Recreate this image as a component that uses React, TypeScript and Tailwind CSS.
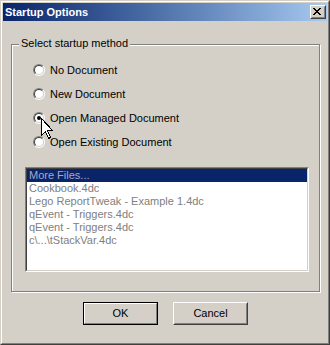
import React from "react";

const items = [
  "Cookbook.4dc",
  "Lego ReportTweak - Example 1.4dc",
  "qEvent - Triggers.4dc",
  "qEvent - Triggers.4dc",
  "c\\...\\tStackVar.4dc",
];

function Radio({ label, checked }: { label: string; checked?: boolean }) {
  return (
    <div className="flex items-center h-[16px] gap-[5px]">
      <div className="w-[12px] h-[12px] rounded-full border border-t-[#808080] border-l-[#808080] border-r-white border-b-white">
        <div className="w-full h-full rounded-full border border-t-[#404040] border-l-[#404040] border-r-[#d4d0c8] border-b-[#d4d0c8] bg-white flex items-center justify-center">
          {checked && <div className="w-[4px] h-[4px] rounded-full bg-black" />}
        </div>
      </div>
      <span className="text-black leading-[13px]">{label}</span>
    </div>
  );
}

function CloseGlyph() {
  const rows = [
    "XX....XX",
    ".XX..XX.",
    "..XXXX..",
    "...XX...",
    "..XXXX..",
    ".XX..XX.",
    "XX....XX",
  ];
  return (
    <svg width="8" height="7" viewBox="0 0 8 7" shapeRendering="crispEdges">
      {rows.map((r, y) =>
        r.split("").map((c, x) =>
          c === "X" ? <rect key={`${x}-${y}`} x={x} y={y} width="1" height="1" fill="#000" /> : null
        )
      )}
    </svg>
  );
}

export default function App() {
  return (
    <div className="relative w-[330px] h-[345px] border border-t-[#d4d0c8] border-l-[#d4d0c8] border-r-[#404040] border-b-[#404040] font-['Liberation_Sans',Arial,sans-serif] text-[11px] select-none">
      <div className="h-full border border-t-white border-l-white border-r-[#808080] border-b-[#808080] bg-[#d4d0c8] p-px flex flex-col">
        {/* Title bar */}
        <div className="h-[18px] bg-linear-to-r from-[#0a246a] to-[#a6caf0] flex items-center justify-between pl-[2px] pr-px">
          <span className="text-white font-bold leading-[13px]">Startup Options</span>
          <div className="w-[16px] h-[14px] border border-t-white border-l-white border-r-[#404040] border-b-[#404040]">
            <div className="w-full h-full border border-t-[#d4d0c8] border-l-[#d4d0c8] border-r-[#808080] border-b-[#808080] bg-[#d4d0c8] pl-px pt-px">
              <CloseGlyph />
            </div>
          </div>
        </div>

        {/* Client */}
        <div className="flex-1 flex flex-col">
          <div className="relative mt-[23px] ml-[8px] w-[309px] h-[248px] border border-[#808080] shadow-[inset_1px_1px_0_#ffffff,1px_1px_0_#ffffff]">
            <span className="absolute -top-[8px] left-[7px] px-[2px] bg-[#d4d0c8] text-black leading-[13px]">
              Select startup method
            </span>
            <div className="flex flex-col gap-[8px] pt-[17px] pl-[21px]">
              <Radio label="No Document" />
              <Radio label="New Document" />
              <Radio label="Open Managed Document" checked />
              <Radio label="Open Existing Document" />
            </div>
            <div className="mt-[17px] ml-[13px] w-[284px] h-[105px] border border-t-[#808080] border-l-[#808080] border-r-white border-b-white">
              <div className="w-full h-full border border-t-[#404040] border-l-[#404040] border-r-[#d4d0c8] border-b-[#d4d0c8] bg-white">
                <div className="h-[13px] leading-[13px] bg-[#0a246a] text-[#a4a8c8] pl-[2px]">More Files...</div>
                {items.map((t, i) => (
                  <div key={i} className="h-[13px] leading-[13px] text-[#808080] pl-[2px]">
                    {t}
                  </div>
                ))}
              </div>
            </div>
          </div>

          <div className="flex mt-[10px] pl-[80px] gap-[15px]">
            <div className="w-[75px] h-[23px] border border-black">
              <div className="w-full h-full border border-t-white border-l-white border-r-[#808080] border-b-[#808080] flex items-center justify-center text-black">
                OK
              </div>
            </div>
            <div className="w-[75px] h-[23px] border border-t-white border-l-white border-r-[#404040] border-b-[#404040]">
              <div className="w-full h-full border border-t-[#d4d0c8] border-l-[#d4d0c8] border-r-[#808080] border-b-[#808080] flex items-center justify-center text-black">
                Cancel
              </div>
            </div>
          </div>
        </div>
      </div>

      {/* Mouse cursor */}
      <svg className="absolute left-[39px] top-[116px]" width="14" height="24" viewBox="0 0 14 24" shapeRendering="crispEdges">
        <polygon
          points="1.5,1.5 1.5,18.5 5.5,14.5 8.5,21.5 10.5,20.5 7.5,13.5 12.5,13.5"
          fill="#ffffff"
          stroke="#000000"
          strokeWidth="1"
          strokeLinejoin="miter"
        />
      </svg>
    </div>
  );
}
